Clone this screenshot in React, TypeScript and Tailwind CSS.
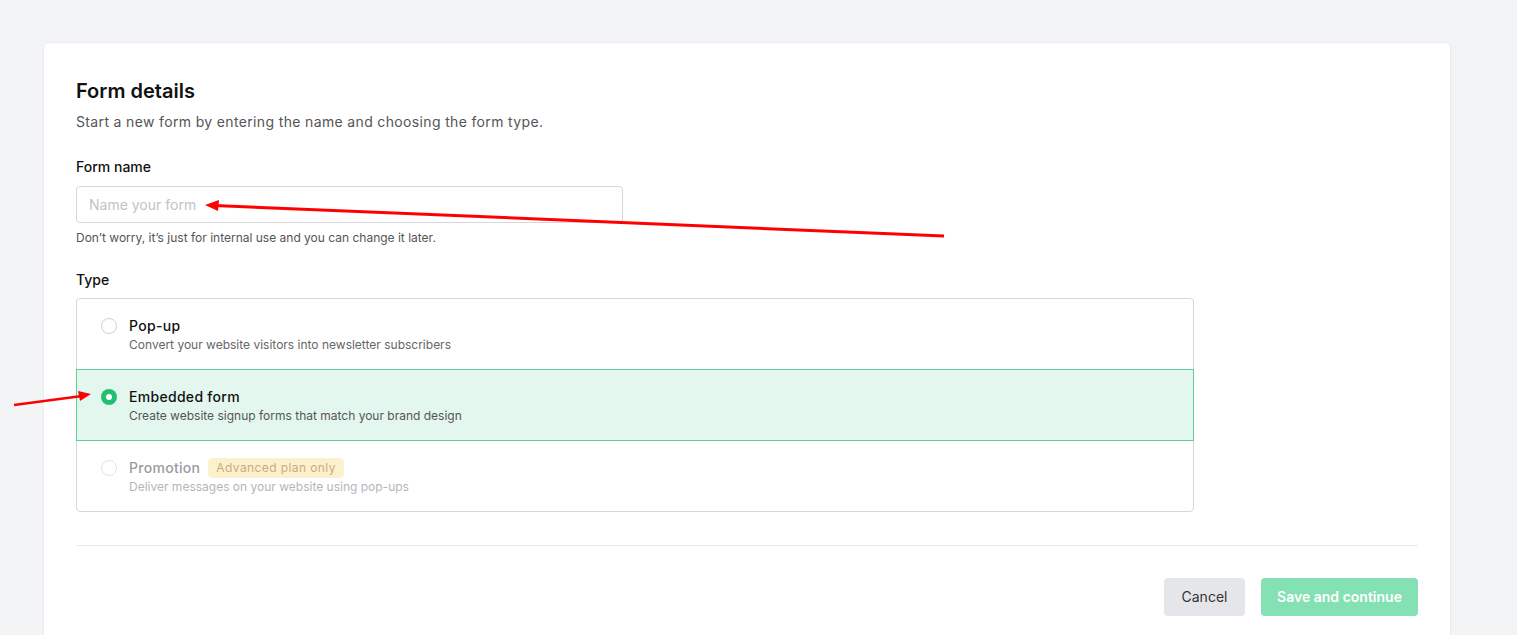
import React from "react";

const font = { fontFamily: "Inter, 'Noto Sans', sans-serif" };

function Radio({ checked, disabled }: { checked?: boolean; disabled?: boolean }) {
  if (checked) {
    return (
      <span className="mt-[2px] flex h-4 w-4 shrink-0 items-center justify-center rounded-full bg-[#1fbf74]">
        <span className="h-[6px] w-[6px] rounded-full bg-white" />
      </span>
    );
  }
  return (
    <span
      className={`mt-[2px] h-4 w-4 shrink-0 rounded-full border bg-white ${
        disabled ? "border-[#e3e3e8]" : "border-[#cfcfd6]"
      }`}
    />
  );
}

export default function App() {
  return (
    <div className="relative min-h-[635px] bg-[#f3f4f6] pl-[43px] pr-[66px] pt-[42px] text-[#111]" style={font}>
      <div className="rounded-md border border-[#ececf0] bg-white px-8 pb-10 pt-[34px]">
        <h1 className="text-[20px] font-semibold leading-7 text-[#111]">Form details</h1>
        <p className="mt-[7px] text-sm leading-5 tracking-[0.35px] text-[#555]">
          Start a new form by entering the name and choosing the form type.
        </p>

        <div className="mt-[25px] text-sm font-medium leading-5 text-[#111]">Form name</div>
        <input
          className="mt-[9px] block h-[37px] w-[547px] rounded border border-[#d6d6dc] px-3 text-sm text-[#111] outline-none placeholder:text-[#c2c2c8]"
          placeholder="Name your form"
        />
        <p className="mt-[7px] text-xs leading-4 text-[#555]">
          Don’t worry, it’s just for internal use and you can change it later.
        </p>

        <div className="mt-6 text-sm font-medium leading-5 text-[#111]">Type</div>
        <div className="mt-2 w-[1118px]">
          <div className="relative flex gap-3 rounded-t border border-[#d6d6dc] pb-4 pl-6 pt-[17px]">
            <Radio />
            <div>
              <div className="text-sm font-medium leading-5 tracking-[0.3px] text-[#111]">Pop-up</div>
              <div className="mt-px text-xs leading-4 text-[#666]">
                Convert your website visitors into newsletter subscribers
              </div>
            </div>
          </div>
          <div className="relative z-10 -mt-px flex gap-3 border border-[#5fcf9a] bg-[#e4f7ef] pb-4 pl-6 pt-[17px]">
            <Radio checked />
            <div>
              <div className="text-sm font-medium leading-5 tracking-[0.3px] text-[#111]">Embedded form</div>
              <div className="mt-px text-xs leading-4 text-[#555]">
                Create website signup forms that match your brand design
              </div>
            </div>
          </div>
          <div className="relative -mt-px flex gap-3 rounded-b border border-[#d6d6dc] pb-4 pl-6 pt-[17px]">
            <Radio disabled />
            <div>
              <div className="flex items-center gap-2">
                <span className="text-sm font-medium leading-5 tracking-[0.3px] text-[#9a9aa0]">Promotion</span>
                <span className="rounded bg-[#fcf1cf] px-2 text-xs leading-5 tracking-[0.4px] text-[#c9ad7a]">
                  Advanced plan only
                </span>
              </div>
              <div className="mt-px text-xs leading-4 text-[#b5b5bb]">
                Deliver messages on your website using pop-ups
              </div>
            </div>
          </div>
        </div>

        <div className="mt-[33px] border-t border-[#ebebef]" />

        <div className="mt-8 flex justify-end gap-4">
          <button className="h-[38px] w-[81px] rounded bg-[#e5e6ea] text-sm text-[#333]">Cancel</button>
          <button className="h-[38px] w-[157px] rounded bg-[#84e1b4] text-sm font-semibold text-white">
            Save and continue
          </button>
        </div>
      </div>

      <svg
        className="pointer-events-none absolute left-0 top-0 z-20"
        width="1517"
        height="635"
        viewBox="0 0 1517 635"
      >
        <line x1="944" y1="236" x2="214" y2="205.5" stroke="#ff0000" strokeWidth="3" />
        <polygon points="205,205 219,200 218,211" fill="#ff0000" />
        <line x1="14" y1="405" x2="82" y2="396" stroke="#ff0000" strokeWidth="2.5" />
        <polygon points="91,394 78,391 80,401" fill="#ff0000" />
      </svg>
    </div>
  );
}
